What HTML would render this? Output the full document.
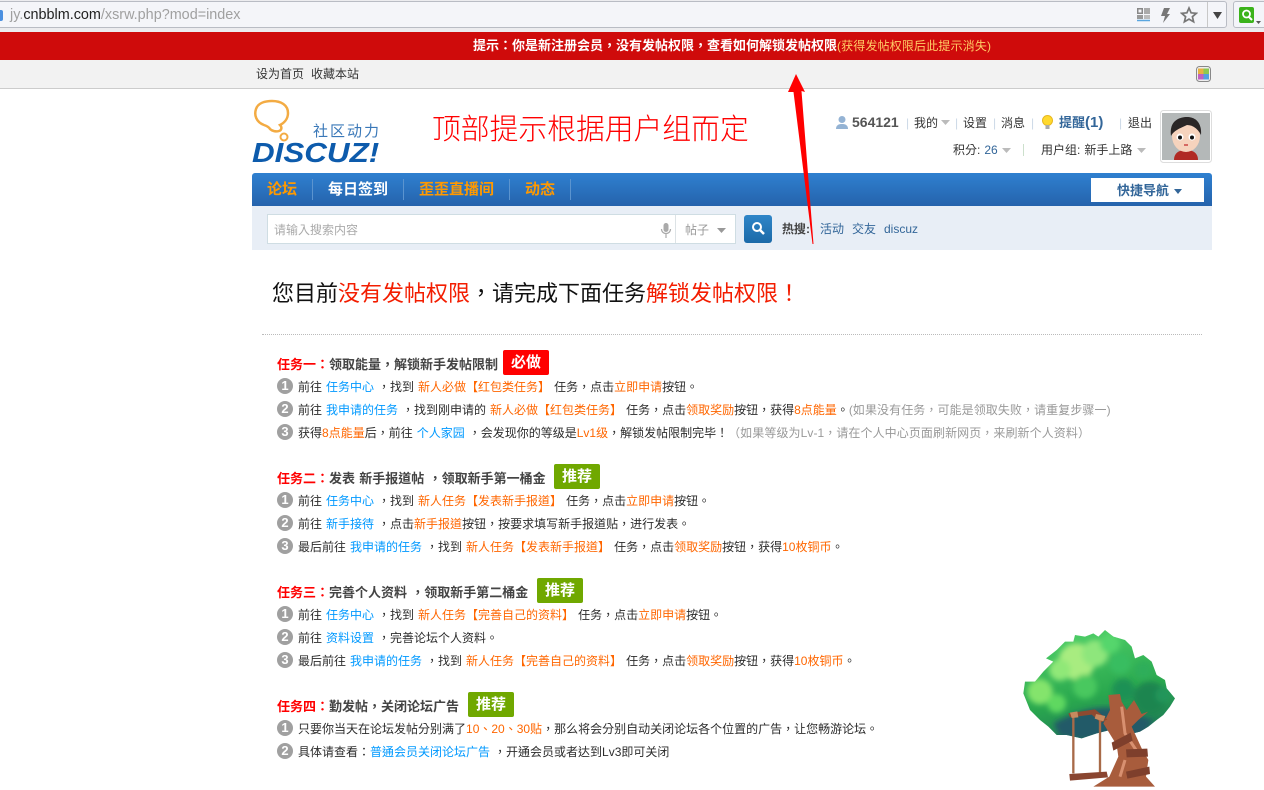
<!DOCTYPE html>
<html lang="zh-TW"><head><meta charset="utf-8"><title>任务</title>
<style>
html,body{margin:0;padding:0;background:#fff}
body{width:1264px;height:790px;overflow:hidden;position:relative;font:12px/16px "Liberation Sans","Noto Sans CJK TC","WenQuanYi Zen Hei",sans-serif;color:#333}
div,span.a,svg.a{position:absolute}
.l{white-space:nowrap;word-spacing:.67px}
.b{color:#09f}.o{color:#f60}.g{color:#999;letter-spacing:.08px}.r{color:#f00}
.n{left:277px;width:16px;height:16px;border-radius:50%;background:#a0a0a0;color:#fff;font:bold 13px/16px "Liberation Sans",sans-serif;text-align:center}
.t{left:298px;color:#2c2c2c}
.h{left:277px;font-weight:bold;color:#444;font-size:13px}
.tag{height:25px;line-height:26px;width:46px;text-align:center;color:#fff;font-weight:bold;font-size:15px;border-radius:2px;background:#70a800}
.s{color:#ccd9e6}
.nv{top:182px;font-size:15px;font-weight:bold;color:#f90;word-spacing:0}
</style></head><body>

<!-- browser chrome -->
<div style="left:0;top:0;width:1264px;height:32px;background:#ececef"></div>
<div style="left:-4px;top:1px;width:1229px;height:25px;background:#f4f5f9;border:1px solid #b9bcc4;border-radius:3px"></div>
<div style="left:-3px;top:10px;width:6px;height:11px;background:#4a8fe0;border-radius:2px"></div>
<div class="l" style="left:10px;top:5px;font-size:14.4px;line-height:20px;color:#a0a0a0;word-spacing:0">jy.<span style="color:#222">cnbblm.com</span>/xsrw.php?mod=index</div>
<svg class="a" style="left:1136px;top:7px" width="16" height="16" viewBox="0 0 16 16"><path d="M1 1h6v6H1zM2.500 2.500h3v3h-3z" fill="#888" fill-rule="evenodd"/><path d="M8 1h6v6H8z" fill="#aaa"/><path d="M1 8h6v4H1z" fill="#999"/><path d="M8 8h6v4H8z" fill="#bbb"/><path d="M1 13.500h13" stroke="#5aa6e0" stroke-width="1.500"/></svg>
<svg class="a" style="left:1160px;top:7px" width="11" height="17" viewBox="0 0 11 17"><path d="M4 1h6L7 7h3L3 16l2-7H1z" fill="#777"/></svg>
<svg class="a" style="left:1180px;top:6px" width="18" height="18" viewBox="0 0 18 18"><path d="M9 2l2.100 4.800 5.200.5-3.900 3.400 1.200 5.100L9 13.100l-4.600 2.700 1.200-5.100L1.700 7.300l5.200-.5z" fill="none" stroke="#777" stroke-width="1.700"/></svg>
<div style="left:1207px;top:2px;width:1px;height:25px;background:#c8c8c8"></div>
<svg class="a" style="left:1212px;top:12px" width="11" height="7"><path d="M1 0h9L5.500 7z" fill="#444"/></svg>
<div style="left:1233px;top:1px;width:40px;height:25px;background:#f4f5f9;border:1px solid #b9bcc4;border-radius:3px"></div>
<div style="left:1239px;top:7px;width:15px;height:16px;background:#3bb31b;border-radius:2px"></div>
<svg class="a" style="left:1240px;top:8px" width="24" height="18" viewBox="0 0 24 18"><circle cx="6.500" cy="6" r="3.500" fill="none" stroke="#fff" stroke-width="1.800"/><path d="M9 9l3 3" stroke="#fff" stroke-width="2"/><path d="M16 13h5l-2.500 3z" fill="#555"/></svg>

<!-- red notice -->
<div style="left:0;top:32px;width:1264px;height:28px;background:#cf0b0b"></div>
<div class="l" style="left:473px;top:38px;color:#fff;font-weight:bold;font-size:13px;word-spacing:0">提示：你是新注册会员，没有发帖权限，查看如何解锁发帖权限<span style="color:#fc6;font-weight:normal;font-size:12px;letter-spacing:.15px">(获得发帖权限后此提示消失)</span></div>

<!-- top links -->
<div style="left:0;top:60px;width:1264px;height:28px;background:#f2f2f2;border-bottom:1px solid #ccc"></div>
<div class="l" style="left:256px;top:66px">设为首页</div>
<div class="l" style="left:311px;top:66px">收藏本站</div>
<svg class="a" style="left:1196px;top:66px" width="15" height="16" viewBox="0 0 15 16"><rect x=".5" y=".5" width="14" height="15" rx="3" fill="#eee" stroke="#888"/><rect x="2" y="2.500" width="5.500" height="5.500" fill="#e8b040"/><rect x="7.500" y="2.500" width="5.500" height="5.500" fill="#8cc850"/><rect x="2" y="8" width="5.500" height="5.500" fill="#c060c0"/><rect x="7.500" y="8" width="5.500" height="5.500" fill="#50a0e0"/></svg>

<!-- logo -->
<svg class="a" style="left:250px;top:98px" width="60" height="46" viewBox="0 0 60 46"><path d="M14 27C6 24 4 17 6 11 8 5 15 3 22 3c9 0 16 4 16 12 0 6-4 10-8 12 2 2 2 5-1 6-3 1-7 0-9-2-1-2-3-3-6-4z" fill="none" stroke="#f3ab43" stroke-width="2.500"/><circle cx="34" cy="39" r="3.500" fill="none" stroke="#f3ab43" stroke-width="2"/></svg>
<div class="l" style="left:313px;top:123px;font-size:15px;line-height:18px;color:#3a78b8;letter-spacing:2px">社区动力</div>
<div class="l" style="left:252px;top:139px;font:italic bold 28px/28px 'Liberation Sans',sans-serif;color:#0d5bac;transform-origin:0 0;transform:scaleX(1.120)">DISCUZ!</div>
<div class="l" lang="zh-CN" style="left:432px;top:111px;font-size:28.800px;line-height:34px;color:#f00;word-spacing:0;font-family:'Noto Sans CJK SC','WenQuanYi Zen Hei',sans-serif;font-weight:300">顶部提示根据用户组而定</div>

<!-- user area -->
<svg class="a" style="left:835px;top:115px" width="14" height="14" viewBox="0 0 14 14"><circle cx="7" cy="4.500" r="3.500" fill="#94b3d4"/><path d="M1 14c0-4 3-5 6-5s6 1 6 5z" fill="#94b3d4"/></svg>
<div class="l" style="left:852px;top:114px;font-weight:bold;font-size:14px;color:#555">564121</div>
<div class="l" style="left:906px;top:115px"><span class="s">|</span></div>
<div class="l" style="left:914px;top:115px">我的</div>
<svg class="a" style="left:941px;top:120px" width="9" height="5"><path d="M0 0h9L4.500 5z" fill="#bbb"/></svg>
<div class="l" style="left:955px;top:115px"><span class="s">|</span></div>
<div class="l" style="left:963px;top:115px">设置</div>
<div class="l" style="left:993px;top:115px"><span class="s">|</span></div>
<div class="l" style="left:1001px;top:115px">消息</div>
<div class="l" style="left:1031px;top:115px"><span class="s">|</span></div>
<svg class="a" style="left:1041px;top:115px" width="13" height="15" viewBox="0 0 13 15"><circle cx="6.500" cy="5.500" r="5" fill="#ffd92e" stroke="#e8b820"/><rect x="4.500" y="10" width="4" height="4" fill="#aaa"/></svg>
<div class="l" style="left:1059px;top:115px;font-weight:bold;font-size:13px;color:#369">提醒<span style="font-size:15px">(1)</span></div>
<div class="l" style="left:1119px;top:115px"><span class="s">|</span></div>
<div class="l" style="left:1128px;top:115px">退出</div>
<div class="l" style="left:953px;top:142px">积分: <span style="color:#369">26</span></div>
<svg class="a" style="left:1002px;top:148px" width="9" height="5"><path d="M0 0h9L4.500 5z" fill="#bbb"/></svg>
<div style="left:1023px;top:144px;width:1px;height:12px;background:#cce0cc"></div>
<div class="l" style="left:1041px;top:142px">用户组: 新手上路</div>
<svg class="a" style="left:1137px;top:148px" width="9" height="5"><path d="M0 0h9L4.500 5z" fill="#bbb"/></svg>
<svg class="a" style="left:1160px;top:110px" width="52" height="53" viewBox="0 0 52 53"><rect x=".5" y=".5" width="51" height="52" rx="3" fill="#fff" stroke="#ddd"/><rect x="2" y="3" width="48" height="47" fill="#b4b8b8"/><path d="M14 50c0-7 5-10 12-10s12 3 12 10z" fill="#b02a24"/><ellipse cx="26" cy="26" rx="14" ry="16" fill="#f6d3bd"/><path d="M11 26C9 12 18 7 27 7c8 0 15 5 14 18-3-6-8-10-14-10-6 3-13 5-16 11z" fill="#2a2626"/><circle cx="20" cy="27" r="3.500" fill="#fff"/><circle cx="32" cy="27" r="3.500" fill="#fff"/><circle cx="20" cy="27.500" r="2" fill="#111"/><circle cx="32" cy="27.500" r="2" fill="#111"/><path d="M24 35h4" stroke="#c44" stroke-width="1.500"/></svg>

<!-- nav -->
<div style="left:252px;top:173px;width:960px;height:33px;background:linear-gradient(#2f80d0,#2563ac);border-radius:3px 3px 0 0"></div>
<div class="l nv" style="left:267px">论坛</div>
<div style="left:312px;top:179px;width:1px;height:21px;background:#5b94cf"></div>
<div class="l nv" style="left:328px;color:#fff">每日签到</div>
<div style="left:403px;top:179px;width:1px;height:21px;background:#5b94cf"></div>
<div class="l nv" style="left:419px">歪歪直播间</div>
<div style="left:509px;top:179px;width:1px;height:21px;background:#5b94cf"></div>
<div class="l nv" style="left:525px">动态</div>
<div style="left:570px;top:179px;width:1px;height:21px;background:#5b94cf"></div>
<div style="left:1091px;top:178px;width:113px;height:24px;background:#fff"></div>
<div class="l" style="left:1117px;top:183px;font-weight:bold;font-size:13px;color:#369">快捷导航</div>
<svg class="a" style="left:1174px;top:189px" width="8" height="5"><path d="M0 0h8L4 5z" fill="#369"/></svg>

<!-- search -->
<div style="left:252px;top:206px;width:960px;height:44px;background:#e8eef6"></div>
<div style="left:267px;top:214px;width:467px;height:28px;background:#fff;border:1px solid #cfdde3"></div>
<div class="l" style="left:274px;top:222px;color:#aaa">请输入搜索内容</div>
<svg class="a" style="left:660px;top:223px" width="12" height="15" viewBox="0 0 12 15"><rect x="3.500" y="0" width="5" height="9" rx="2.500" fill="#aaa"/><path d="M1.500 6c0 6 9 6 9 0M6 11v4" fill="none" stroke="#aaa" stroke-width="1.200"/></svg>
<div style="left:675px;top:215px;width:1px;height:28px;background:#dde3e6"></div>
<div class="l" style="left:685px;top:222px;color:#999">帖子</div>
<svg class="a" style="left:717px;top:228px" width="9" height="5"><path d="M0 0h9L4.500 5z" fill="#999"/></svg>
<div style="left:744px;top:215px;width:28px;height:28px;background:linear-gradient(#2f86c8,#1b6aa8);border-radius:3px"></div>
<svg class="a" style="left:751px;top:221px" width="15" height="15" viewBox="0 0 15 15"><circle cx="6" cy="6" r="4" fill="none" stroke="#fff" stroke-width="2"/><path d="M9 9l4 4" stroke="#fff" stroke-width="2.500"/></svg>
<div class="l" style="left:782px;top:221px;font-weight:bold;color:#444">热搜:</div>
<div class="l" style="left:820px;top:221px;color:#369">活动</div>
<div class="l" style="left:852px;top:221px;color:#369">交友</div>
<div class="l" style="left:884px;top:221px;color:#369">discuz</div>

<!-- title -->
<div class="l" style="left:272px;top:277px;font-size:22px;line-height:30px;color:#111;word-spacing:0;font-family:'Noto Sans CJK TC','WenQuanYi Zen Hei',sans-serif;font-weight:400">您目前<span style="color:#f31d00">没有发帖权限</span>，请完成下面任务<span style="color:#f31d00">解锁发帖权限！</span></div>
<div style="left:262px;top:334px;width:940px;border-top:1px dotted #bbb"></div>

<!-- task one -->
<div class="l h" style="top:357px"><span class="r">任务一：</span>领取能量，解锁新手发帖限制</div>
<div class="tag" style="left:503px;top:350px;background:#f00">必做</div>
<div class="n" style="top:378px">1</div>
<div class="l t" style="top:379px">前往 <span class="b">任务中心</span> ，找到 <span class="o">新人必做【红包类任务】</span> 任务，点击<span class="o">立即申请</span>按钮。</div>
<div class="n" style="top:401px">2</div>
<div class="l t" style="top:402px">前往 <span class="b">我申请的任务</span> ，找到刚申请的 <span class="o">新人必做【红包类任务】</span> 任务，点击<span class="o">领取奖励</span>按钮，获得<span class="o">8点能量</span>。<span class="g">(如果没有任务，可能是领取失败，请重复步骤一)</span></div>
<div class="n" style="top:424px">3</div>
<div class="l t" style="top:425px">获得<span class="o">8点能量</span>后，前往 <span class="b">个人家园</span> ，会发现你的等级是<span class="o">Lv1级</span>，解锁发帖限制完毕！<span class="g">（如果等级为Lv-1，请在个人中心页面刷新网页，来刷新个人资料）</span></div>

<!-- task two -->
<div class="l h" style="top:471px"><span class="r">任务二：</span>发表 新手报道帖 ，领取新手第一桶金</div>
<div class="tag" style="left:554px;top:464px">推荐</div>
<div class="n" style="top:492px">1</div>
<div class="l t" style="top:493px">前往 <span class="b">任务中心</span> ，找到 <span class="o">新人任务【发表新手报道】</span> 任务，点击<span class="o">立即申请</span>按钮。</div>
<div class="n" style="top:515px">2</div>
<div class="l t" style="top:516px">前往 <span class="b">新手接待</span> ，点击<span class="o">新手报道</span>按钮，按要求填写新手报道贴，进行发表。</div>
<div class="n" style="top:538px">3</div>
<div class="l t" style="top:539px">最后前往 <span class="b">我申请的任务</span> ，找到 <span class="o">新人任务【发表新手报道】</span> 任务，点击<span class="o">领取奖励</span>按钮，获得<span class="o">10枚铜币</span>。</div>

<!-- task three -->
<div class="l h" style="top:585px"><span class="r">任务三：</span>完善个人资料 ，领取新手第二桶金</div>
<div class="tag" style="left:537px;top:578px">推荐</div>
<div class="n" style="top:606px">1</div>
<div class="l t" style="top:607px">前往 <span class="b">任务中心</span> ，找到 <span class="o">新人任务【完善自己的资料】</span> 任务，点击<span class="o">立即申请</span>按钮。</div>
<div class="n" style="top:629px">2</div>
<div class="l t" style="top:630px">前往 <span class="b">资料设置</span> ，完善论坛个人资料。</div>
<div class="n" style="top:652px">3</div>
<div class="l t" style="top:653px">最后前往 <span class="b">我申请的任务</span> ，找到 <span class="o">新人任务【完善自己的资料】</span> 任务，点击<span class="o">领取奖励</span>按钮，获得<span class="o">10枚铜币</span>。</div>

<!-- task four -->
<div class="l h" style="top:699px"><span class="r">任务四：</span>勤发帖，关闭论坛广告</div>
<div class="tag" style="left:468px;top:692px">推荐</div>
<div class="n" style="top:720px">1</div>
<div class="l t" style="top:721px">只要你当天在论坛发帖分别满了<span class="o">10、20、30贴</span>，那么将会分别自动关闭论坛各个位置的广告，让您畅游论坛。</div>
<div class="n" style="top:743px">2</div>
<div class="l t" style="top:744px">具体请查看：<span class="b">普通会员关闭论坛广告</span> ，开通会员或者达到Lv3即可关闭</div>

<!-- tree -->
<svg class="a" style="left:1010px;top:620px" width="180" height="170" viewBox="0 0 540 510">
<defs>
<linearGradient id="c" x1=".3" y1="0" x2=".6" y2="1"><stop offset="0" stop-color="#4fcf68"/><stop offset=".6" stop-color="#2aa84e"/><stop offset="1" stop-color="#1f7a56"/></linearGradient>
<clipPath id="cp"><path d="M45 185L75 185 100 155 130 125 108 115 140 90 165 65 190 65 195 45 225 50 250 40 265 50 285 30 310 50 345 60 365 80 375 115 400 105 425 125 440 165 465 180 470 205 495 235 480 260 460 285 440 300 415 320 390 335 350 345 300 330 260 340 215 355 170 345 140 345 115 320 90 300 60 270 40 220Z"/></clipPath>
<filter id="bl"><feGaussianBlur stdDeviation="8"/></filter>
</defs>
<path d="M45 185L75 185 100 155 130 125 108 115 140 90 165 65 190 65 195 45 225 50 250 40 265 50 285 30 310 50 345 60 365 80 375 115 400 105 425 125 440 165 465 180 470 205 495 235 480 260 460 285 440 300 415 320 390 335 350 345 300 330 260 340 215 355 170 345 140 345 115 320 90 300 60 270 40 220Z" fill="url(#c)"/>
<g clip-path="url(#cp)"><g filter="url(#bl)">
<circle cx="200" cy="125" r="55" fill="#a8ec80"/><circle cx="255" cy="100" r="40" fill="#8ee67c"/><circle cx="150" cy="150" r="32" fill="#90e878"/>
<circle cx="90" cy="215" r="38" fill="#84e46c"/><circle cx="140" cy="250" r="28" fill="#5fd860"/><circle cx="300" cy="70" r="30" fill="#55d66c"/>
<circle cx="225" cy="200" r="36" fill="#48c85e"/><circle cx="330" cy="130" r="32" fill="#39bd60"/><circle cx="400" cy="150" r="26" fill="#2fae5a"/>
<circle cx="420" cy="235" r="50" fill="#1c8550"/><circle cx="460" cy="225" r="24" fill="#23955a"/><circle cx="340" cy="210" r="34" fill="#1f9154"/>
</g>
<path d="M130 310Q250 245 340 270L430 300 400 350 215 360 150 350Z" fill="#235a68" filter="url(#bl)"/>
</g>
<path d="M295 225L330 222 335 245 350 270 372 240 385 262 395 282 415 275 385 300 365 320 395 385 415 420 408 470 435 500 250 500 298 470 325 410 320 375 280 310 300 270Z" fill="#a85c3c"/>
<path d="M335 260L345 340 385 400M345 420L330 470" stroke="#d89070" stroke-width="9" fill="none"/>
<path d="M175 280L255 268 292 298 272 308 245 284 180 292Z" fill="#8e4a30"/>
<path d="M190 290V460M270 300V460" stroke="#a86a48" stroke-width="7"/>
<path d="M180 278l22-4 3 18-20 2zM258 282l28 6-6 16-26-8z" fill="#c78a5f"/>
<path d="M178 462L290 455 294 472 180 482Z" fill="#8a4530"/>
<path d="M305 368L362 338 368 362 310 392Z" fill="#7e3f2c"/>
<path d="M348 388L412 386 414 410 350 412Z" fill="#7e3f2c"/>
<path d="M348 455L418 440 420 462 352 476Z" fill="#7e3f2c"/>
</svg>

<!-- arrow -->
<svg class="a" style="left:770px;top:60px" width="60" height="200" viewBox="770 60 60 200"><path d="M796 74L805 92 801.500 91 813.500 244 812.500 244 793.500 92 788 92Z" fill="#f00"/></svg>
</body></html>
